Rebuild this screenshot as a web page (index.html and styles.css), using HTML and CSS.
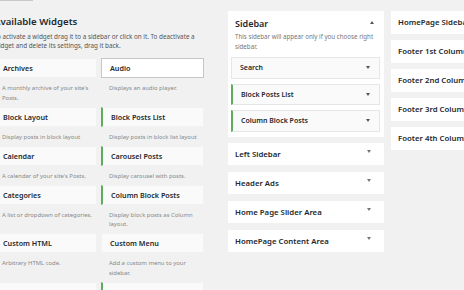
FILE: index.html
```
<!DOCTYPE html>
<html lang="en">
<head>
    <meta charset="UTF-8">
    <title>Widgets</title>
    <link rel="stylesheet" href="styles.css">
</head>
<body>
<div class="tabline"></div>
<div class="columns">
  <section class="available">
    <h2>Available Widgets</h2>
    <p class="intro">To activate a widget drag it to a sidebar or click on it. To deactivate a widget and delete its settings, drag it back.</p>
    <div class="widget-grid">
      <div class="widget">
        <div class="widget-top">Archives</div>
        <div class="widget-desc">A monthly archive of your site's Posts.</div>
      </div>
      <div class="widget">
        <div class="widget-top focused">Audio</div>
        <div class="widget-desc">Displays an audio player.</div>
      </div>
      <div class="widget">
        <div class="widget-top">Block Layout</div>
        <div class="widget-desc">Display posts in block layout</div>
      </div>
      <div class="widget">
        <div class="widget-top theme">Block Posts List</div>
        <div class="widget-desc">Display posts in block list layout</div>
      </div>
      <div class="widget">
        <div class="widget-top">Calendar</div>
        <div class="widget-desc">A calendar of your site's Posts.</div>
      </div>
      <div class="widget">
        <div class="widget-top theme">Carousel Posts</div>
        <div class="widget-desc">Display carousel with posts.</div>
      </div>
      <div class="widget">
        <div class="widget-top">Categories</div>
        <div class="widget-desc">A list or dropdown of categories.</div>
      </div>
      <div class="widget">
        <div class="widget-top theme">Column Block Posts</div>
        <div class="widget-desc">Display block posts as Column layout.</div>
      </div>
      <div class="widget">
        <div class="widget-top">Custom HTML</div>
        <div class="widget-desc">Arbitrary HTML code.</div>
      </div>
      <div class="widget">
        <div class="widget-top">Custom Menu</div>
        <div class="widget-desc">Add a custom menu to your sidebar.</div>
      </div>
      <div class="widget">
        <div class="widget-top">Featured Posts</div>
        <div class="widget-desc">Display featured posts.</div>
      </div>
      <div class="widget">
        <div class="widget-top theme">Grid Posts</div>
        <div class="widget-desc">Display posts in grid layout.</div>
      </div>
    </div>
  </section>

  <section class="sidebars">
    <div class="sidebar open">
      <div class="sidebar-name">
        <h2>Sidebar</h2>
        <span class="arrow up"></span>
      </div>
      <p class="sidebar-desc">This sidebar will appear only if you choose right sidebar.</p>
      <div class="sidebar-widget">Search<span class="arrow small"></span></div>
      <div class="sidebar-widget theme">Block Posts List<span class="arrow small"></span></div>
      <div class="sidebar-widget theme">Column Block Posts<span class="arrow small"></span></div>
    </div>
    <div class="sidebar"><h2>Left Sidebar</h2><span class="arrow"></span></div>
    <div class="sidebar"><h2>Header Ads</h2><span class="arrow"></span></div>
    <div class="sidebar"><h2>Home Page Slider Area</h2><span class="arrow"></span></div>
    <div class="sidebar"><h2>HomePage Content Area</h2><span class="arrow"></span></div>
  </section>

  <section class="sidebars">
    <div class="sidebar"><h2>HomePage Sidebar</h2><span class="arrow"></span></div>
    <div class="sidebar"><h2>Footer 1st Column</h2><span class="arrow"></span></div>
    <div class="sidebar"><h2>Footer 2nd Column</h2><span class="arrow"></span></div>
    <div class="sidebar"><h2>Footer 3rd Column</h2><span class="arrow"></span></div>
    <div class="sidebar"><h2>Footer 4th Column</h2><span class="arrow"></span></div>
  </section>
</div>
</body>
</html>
```

FILE: styles.css
```
html, body {
    margin: 0;
    padding: 0;
    height: 100%;
    overflow: hidden;
}
body {
    background: #f1f1f1;
    font-family: "Noto Sans", "Open Sans", sans-serif;
    color: #23282d;
}
.tabline {
    width: 33px;
    height: 1px;
    background: #c9c9c9;
}
.columns {
    display: flex;
    align-items: flex-start;
}
.available {
    flex: none;
    width: 210px;
    margin-left: -6px;
    margin-right: 24px;
}
.available h2 {
    margin: 15px 0 0;
    font-size: 9.6px;
    line-height: 12px;
    font-weight: 600;
}
.intro {
    margin: 3.5px 0 0;
    font-size: 6.3px;
    line-height: 9.5px;
    color: #555;
}
.widget-grid {
    display: grid;
    grid-template-columns: 103px 103px;
    column-gap: 4px;
    margin-top: 7.5px;
}
.widget-top {
    box-sizing: border-box;
    height: 20px;
    padding: 0 8px;
    line-height: 19px;
    font-size: 7.2px;
    font-weight: 600;
    background: #fafafa;
    border: 1px solid #f2f2f2;
}
.widget-top.focused {
    background: #fff;
    border-color: #c6c6c6;
}
.widget-top.theme {
    border-left: 2px solid #5cad5c;
}
.widget-desc {
    padding: 6px 2px 3.5px 8px;
    font-size: 5.9px;
    line-height: 9.5px;
    color: #888;
}
.sidebars {
    flex: none;
    width: 156px;
    margin-right: 7px;
    margin-top: 10px;
}
.sidebar {
    box-sizing: border-box;
    height: 22.5px;
    margin-bottom: 6.5px;
    padding: 0 7px;
    background: #fff;
    display: flex;
    align-items: center;
    justify-content: space-between;
}
.sidebar h2 {
    margin: 0;
    font-size: 7.8px;
    font-weight: 600;
}
.sidebar.open {
    height: auto;
    display: block;
    padding: 0 4px 5px 3px;
    margin-bottom: 6px;
}
.sidebar-name {
    display: flex;
    align-items: center;
    justify-content: space-between;
    height: 24px;
    padding: 0 6px 0 4px;
}
.sidebar-name h2 {
    font-size: 9px;
}
.sidebar-desc {
    margin: -3px 0 0;
    padding: 0 4px;
    font-size: 6.2px;
    line-height: 10px;
    color: #777;
}
.sidebar-widget {
    box-sizing: border-box;
    height: 21.5px;
    margin-top: 5px;
    padding: 0 8px;
    display: flex;
    align-items: center;
    justify-content: space-between;
    font-size: 7px;
    font-weight: 600;
    background: #fafafa;
    border: 1px solid #e6e6e6;
}
.sidebar-widget:first-of-type {
    margin-top: 7px;
}
.sidebar-widget.theme {
    border-left: 2px solid #5cad5c;
}
.arrow {
    width: 0;
    height: 0;
    border-left: 2.5px solid transparent;
    border-right: 2.5px solid transparent;
    border-top: 3px solid #72777c;
    margin-right: 6px;
    margin-top: -4px;
}
.arrow.small {
    margin-right: 1px;
    margin-top: 0;
    border-top-color: #555;
}
.arrow.up {
    border-top: 0;
    border-bottom: 3px solid #555;
    margin-right: 0;
    margin-top: -2px;
}
```
